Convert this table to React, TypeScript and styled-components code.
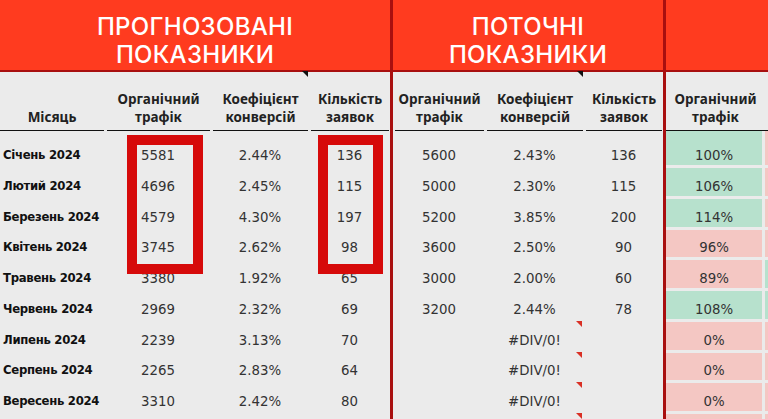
import React from 'react';
import styled, { createGlobalStyle } from 'styled-components';

const GlobalStyle = createGlobalStyle`
  html, body { margin: 0; padding: 0; background: #ebebeb; }
  body { width: 768px; height: 419px; overflow: hidden; }
`;

const DARK_RED = '#a80f0f';

const Sheet = styled.div`
  display: flex;
  align-items: flex-start;
  width: 768px;
  height: 419px;
  overflow: hidden;
  background: #ebebeb;
`;

const Group = styled.section<{ $width?: number; $divider?: boolean }>`
  position: relative;
  flex: ${p => (p.$width ? 'none' : '1 1 auto')};
  width: ${p => (p.$width ? `${p.$width}px` : 'auto')};
  min-width: 0;
  height: 419px;
  overflow: hidden;
  display: flex;
  flex-direction: column;
  border-right: ${p => (p.$divider ? `3px solid ${DARK_RED}` : 'none')};
`;

const Banner = styled.div`
  flex: none;
  height: 72px;
  box-sizing: border-box;
  padding-top: 13px;
  border-bottom: 2px solid ${DARK_RED};
  background: #ff3b1f;
  color: #ffffff;
  text-align: center;
  font-family: Inter, "Noto Sans", sans-serif;
  font-weight: 500;
  font-size: 24px;
  line-height: 28px;
  letter-spacing: 0.3px;
`;

const Table = styled.div<{ $cols: string }>`
  flex: none;
  display: grid;
  grid-template-columns: ${p => p.$cols};
  grid-template-rows: 59px 37px repeat(9, 30.75px);
`;

const HeadCell = styled.div<{ $flag?: boolean; $gapless?: boolean; $first?: boolean }>`
  position: relative;
  box-sizing: border-box;
  margin: ${p => (p.$gapless ? '0' : p.$first ? '0 1px 0 0' : '0 1px 0 2px')};
  display: flex;
  align-items: flex-end;
  justify-content: center;
  padding-bottom: 4px;
  border-bottom: 1.5px solid #111;
  text-align: center;
  font-family: "Noto Sans", sans-serif;
  font-weight: 700;
  font-size: 13.5px;
  line-height: 18px;
  color: #222;
  white-space: nowrap;
  &::after {
    content: '';
    display: ${p => (p.$flag ? 'block' : 'none')};
    position: absolute;
    top: -1px;
    right: 0px;
    border-top: 6px solid #111;
    border-left: 6px solid transparent;
  }
`;

const Cell = styled.div<{ $flag?: boolean }>`
  position: relative;
  box-sizing: border-box;
  display: flex;
  align-items: flex-end;
  justify-content: center;
  padding-bottom: 4px;
  font-family: "DejaVu Sans", Verdana, sans-serif;
  font-size: 13.33px;
  line-height: 16px;
  color: #333;
  white-space: nowrap;
  &::after {
    content: '';
    display: ${p => (p.$flag ? 'block' : 'none')};
    position: absolute;
    top: -1px;
    right: 2px;
    border-top: 6px solid #d93025;
    border-left: 6px solid transparent;
  }
`;

const MonthCell = styled(Cell)`
  justify-content: flex-start;
  padding-left: 3px;
  padding-bottom: 5px;
  font-weight: 700;
  font-size: 11.7px;
  letter-spacing: -0.3px;
  color: #111;
`;

const ScoreCell = styled(Cell)<{ $good: boolean }>`
  margin: 0 3px 3px 0;
  padding-bottom: 1px;
  background: ${p => (p.$good ? '#b7e1cd' : '#f4c7c3')};
`;

const Callout = styled.div<{ $left: number; $width: number }>`
  position: absolute;
  top: 135px;
  left: ${p => p.$left}px;
  width: ${p => p.$width}px;
  height: 139px;
  box-sizing: border-box;
  border: 10px solid #d60a0a;
  pointer-events: none;
`;

type Row = {
  month: string;
  f: [string, string, string];
  c: [string, string, string];
  err: boolean;
  pct: string;
  good: boolean;
  next: boolean;
};

const rows: Row[] = [
  { month: 'Січень 2024', f: ['5581', '2.44%', '136'], c: ['5600', '2.43%', '136'], err: false, pct: '100%', good: true, next: false },
  { month: 'Лютий 2024', f: ['4696', '2.45%', '115'], c: ['5000', '2.30%', '115'], err: false, pct: '106%', good: true, next: false },
  { month: 'Березень 2024', f: ['4579', '4.30%', '197'], c: ['5200', '3.85%', '200'], err: false, pct: '114%', good: true, next: false },
  { month: 'Квітень 2024', f: ['3745', '2.62%', '98'], c: ['3600', '2.50%', '90'], err: false, pct: '96%', good: false, next: false },
  { month: 'Травень 2024', f: ['3380', '1.92%', '65'], c: ['3000', '2.00%', '60'], err: false, pct: '89%', good: false, next: true },
  { month: 'Червень 2024', f: ['2969', '2.32%', '69'], c: ['3200', '2.44%', '78'], err: false, pct: '108%', good: true, next: true },
  { month: 'Липень 2024', f: ['2239', '3.13%', '70'], c: ['', '#DIV/0!', ''], err: true, pct: '0%', good: false, next: false },
  { month: 'Серпень 2024', f: ['2265', '2.83%', '64'], c: ['', '#DIV/0!', ''], err: true, pct: '0%', good: false, next: false },
  { month: 'Вересень 2024', f: ['3310', '2.42%', '80'], c: ['', '#DIV/0!', ''], err: true, pct: '0%', good: false, next: false },
  { month: '', f: ['', '', ''], c: ['', '', ''], err: true, pct: '', good: false, next: false },
];

const Two = ({ a, b }: { a: string; b: string }) => (
  <span>
    {a}
    <br />
    {b}
  </span>
);

export default function App() {
  return (
    <>
      <GlobalStyle />
      <Sheet>
        <Group $width={390} $divider>
          <Banner>
            ПРОГНОЗОВАНІ
            <br />
            ПОКАЗНИКИ
          </Banner>
          <Table $cols="105px 106px 98px 81px">
            <HeadCell $first>Місяць</HeadCell>
            <HeadCell><Two a="Органічний" b="трафік" /></HeadCell>
            <HeadCell $flag><Two a="Коефіцієнт" b="конверсій" /></HeadCell>
            <HeadCell><Two a="Кількість" b="заявок" /></HeadCell>
            {rows.map((r, i) => (
              <React.Fragment key={i}>
                <MonthCell>{r.month}</MonthCell>
                <Cell>{r.f[0]}</Cell>
                <Cell>{r.f[1]}</Cell>
                <Cell>{r.f[2]}</Cell>
              </React.Fragment>
            ))}
          </Table>
          <Callout $left={127} $width={76} />
          <Callout $left={318} $width={65} />
        </Group>
        <Group $width={270} $divider>
          <Banner>
            ПОТОЧНІ
            <br />
            ПОКАЗНИКИ
          </Banner>
          <Table $cols="92px 99px 79px">
            <HeadCell><Two a="Органічний" b="трафік" /></HeadCell>
            <HeadCell $flag><Two a="Коефіцієнт" b="конверсій" /></HeadCell>
            <HeadCell><Two a="Кількість" b="заявок" /></HeadCell>
            {rows.map((r, i) => (
              <React.Fragment key={i}>
                <Cell>{r.c[0]}</Cell>
                <Cell $flag={r.err}>{r.c[1]}</Cell>
                <Cell>{r.c[2]}</Cell>
              </React.Fragment>
            ))}
          </Table>
        </Group>
        <Group>
          <Banner />
          <Table $cols="99px 99px">
            <HeadCell $gapless><Two a="Органічний" b="трафік" /></HeadCell>
            <HeadCell $gapless />
            {rows.map((r, i) => (
              <React.Fragment key={i}>
                <ScoreCell $good={r.good}>{r.pct}</ScoreCell>
                <ScoreCell $good={r.next} />
              </React.Fragment>
            ))}
          </Table>
        </Group>
      </Sheet>
    </>
  );
}
